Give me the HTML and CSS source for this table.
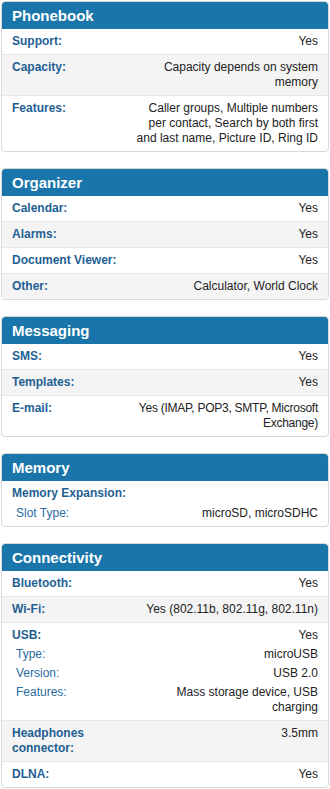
FILE: index.html
```html
<!DOCTYPE html>
<html lang="en">
<head>
<meta charset="utf-8">
<title>Specifications</title>
<link rel="stylesheet" href="styles.css">
</head>
<body>
<main class="specs">
  <section class="card">
    <h2 class="card-title">Phonebook</h2>
    <div class="row"><div class="label">Support:</div><div class="value">Yes</div></div>
    <div class="row"><div class="label">Capacity:</div><div class="value">Capacity depends on system memory</div></div>
    <div class="row"><div class="label">Features:</div><div class="value">Caller groups, Multiple numbers per contact, Search by both first and last name, Picture ID, Ring ID</div></div>
  </section>

  <section class="card">
    <h2 class="card-title">Organizer</h2>
    <div class="row"><div class="label">Calendar:</div><div class="value">Yes</div></div>
    <div class="row"><div class="label">Alarms:</div><div class="value">Yes</div></div>
    <div class="row"><div class="label">Document Viewer:</div><div class="value">Yes</div></div>
    <div class="row"><div class="label">Other:</div><div class="value">Calculator, World Clock</div></div>
  </section>

  <section class="card">
    <h2 class="card-title">Messaging</h2>
    <div class="row"><div class="label">SMS:</div><div class="value">Yes</div></div>
    <div class="row"><div class="label">Templates:</div><div class="value">Yes</div></div>
    <div class="row"><div class="label">E-mail:</div><div class="value condensed">Yes (IMAP, POP3, SMTP, Microsoft Exchange)</div></div>
  </section>

  <section class="card">
    <h2 class="card-title">Memory</h2>
    <div class="row group">
      <div class="label span">Memory Expansion:</div>
      <div class="sublabel">Slot Type:</div><div class="value">microSD, microSDHC</div>
    </div>
  </section>

  <section class="card">
    <h2 class="card-title">Connectivity</h2>
    <div class="row"><div class="label">Bluetooth:</div><div class="value">Yes</div></div>
    <div class="row"><div class="label">Wi-Fi:</div><div class="value">Yes (802.11b, 802.11g, 802.11n)</div></div>
    <div class="row group">
      <div class="label">USB:</div><div class="value">Yes</div>
      <div class="sublabel">Type:</div><div class="value">microUSB</div>
      <div class="sublabel">Version:</div><div class="value">USB 2.0</div>
      <div class="sublabel">Features:</div><div class="value">Mass storage device, USB charging</div>
    </div>
    <div class="row"><div class="label">Headphones connector:</div><div class="value">3.5mm</div></div>
    <div class="row"><div class="label">DLNA:</div><div class="value">Yes</div></div>
  </section>
</main>
</body>
</html>
```

FILE: styles.css
```css
* {
  box-sizing: border-box;
}

html, body {
  margin: 0;
  background: #ffffff;
}

body {
  padding: 1px 1px 0 1px;
  font-family: "Liberation Sans", Arial, sans-serif;
  font-size: 12px;
  color: #222222;
}

.specs {
  display: flex;
  flex-direction: column;
  gap: 16px;
}

.card {
  border: 1px solid #d9d9d9;
  border-radius: 4px;
  overflow: hidden;
  background: #ffffff;
}

.card-title {
  margin: 0;
  height: 27px;
  line-height: 27px;
  padding: 0 10px;
  background: #1a76aa;
  color: #ffffff;
  font-size: 15px;
  font-weight: bold;
  border-radius: 3px 3px 0 0;
}

.row {
  display: grid;
  grid-template-columns: 2fr 3fr;
  padding: 5px 10px 5px 10px;
  line-height: 15px;
  border-top: 1px solid #e6e6e6;
}

.card-title + .row {
  border-top: 0;
}

.row:nth-of-type(even) {
  background: #f4f4f4;
}

.label {
  font-weight: bold;
  color: #1f5f93;
}

.label.span {
  grid-column: 1 / -1;
}

.sublabel {
  padding-left: 4px;
  color: #2b6b9f;
}

.value {
  text-align: right;
  color: #222222;
}

.value.condensed {
  letter-spacing: -0.25px;
}

.group {
  row-gap: 4px;
}

.card:nth-of-type(4) .group {
  row-gap: 5px;
}
```
